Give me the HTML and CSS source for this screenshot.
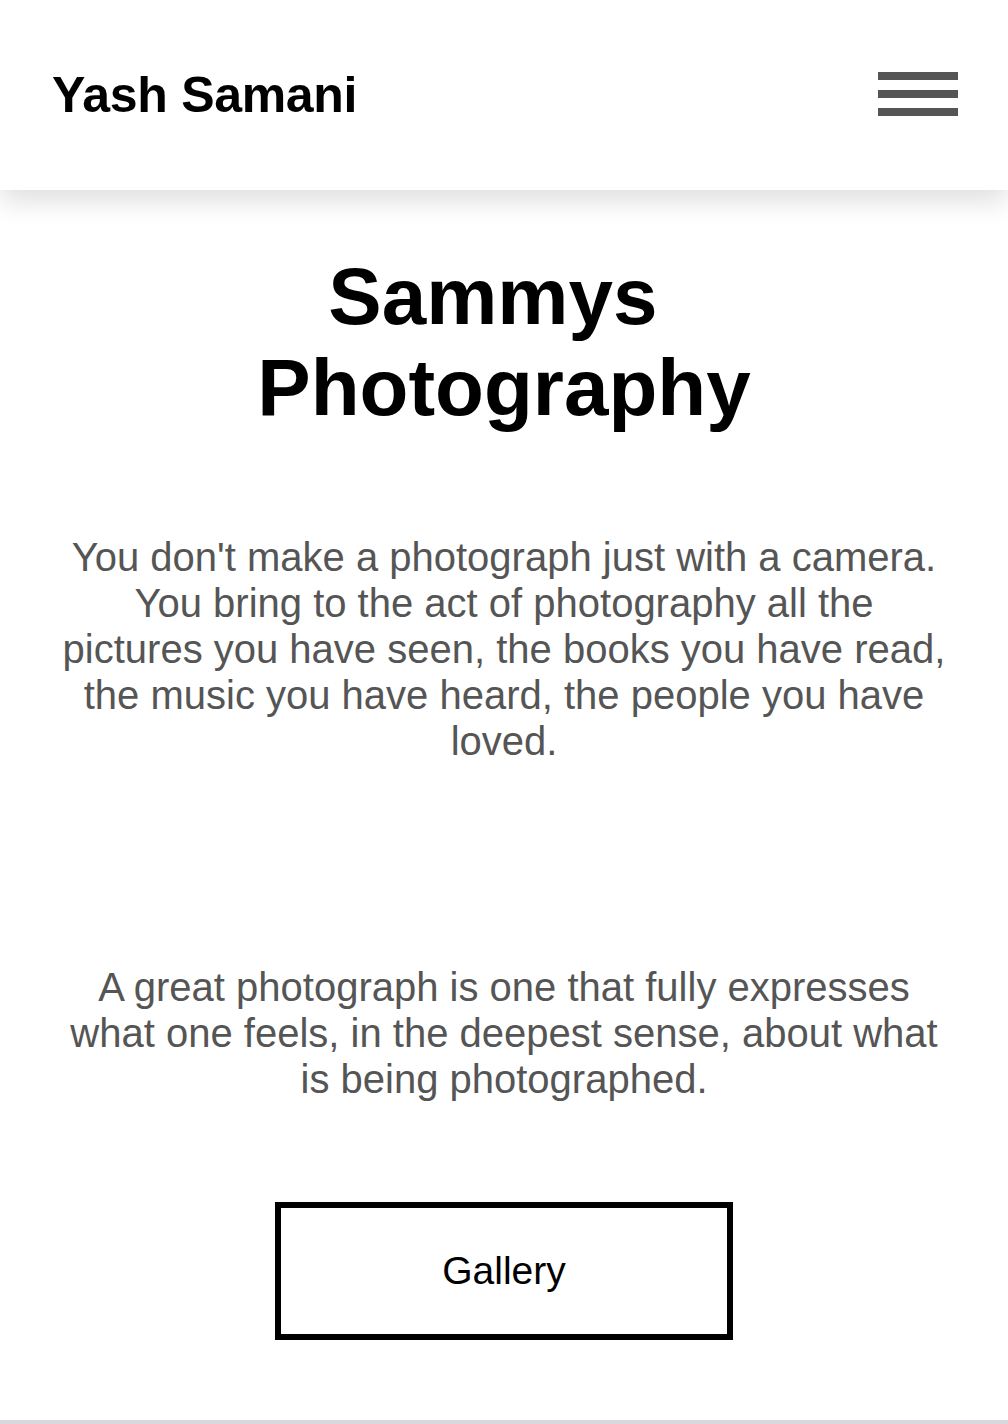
FILE: index.html
```html
<!DOCTYPE html>
<html lang="en">
<head>
<meta charset="utf-8">
<title>Sammys Photography</title>
<link rel="stylesheet" href="styles.css">
</head>
<body>
<header class="site-header">
  <div class="logo">Yash Samani</div>
  <button class="menu-btn" aria-label="Menu">
    <span class="bar"></span>
    <span class="bar"></span>
    <span class="bar"></span>
  </button>
</header>
<main class="hero">
  <h1 class="title">Sammys&nbsp;<br>Photography</h1>
  <p class="quote quote-first">You don't make a photograph just with a camera. You bring to the act of photography all the pictures you have seen, the books you have read, the music you have heard, the people you have loved.</p>
  <p class="quote quote-second">A great photograph is one that fully expresses what one feels, in the deepest sense, about what is being photographed.</p>
  <a class="gallery-btn" href="#">Gallery</a>
</main>
<div class="next-section"></div>
</body>
</html>
```
FILE: styles.css
```css
* { box-sizing: border-box; }
html, body {
  margin: 0;
  padding: 0;
  background: #fff;
  font-family: "Liberation Sans", Arial, Helvetica, sans-serif;
}
body { overflow: hidden; }
.site-header {
  position: relative;
  z-index: 2;
  height: 190px;
  padding: 0 50px 0 52px;
  display: flex;
  align-items: center;
  justify-content: space-between;
  background: #fff;
  box-shadow: 0 12px 24px rgba(0, 0, 0, 0.12);
}
.logo {
  font-size: 50px;
  font-weight: 700;
  color: #000;
  letter-spacing: -0.3px;
}
.menu-btn {
  display: flex;
  flex-direction: column;
  gap: 10px;
  padding: 0;
  border: 0;
  background: transparent;
  margin-top: -2px;
}
.bar {
  display: block;
  width: 80px;
  height: 8px;
  background: #555;
}
.hero {
  display: flex;
  flex-direction: column;
  align-items: center;
  padding: 61px 0 80px;
  text-align: center;
}
.title {
  margin: 0;
  font-size: 80px;
  line-height: 91px;
  font-weight: 700;
  color: #000;
}
.quote {
  width: 885px;
  margin: 0;
  font-size: 40px;
  line-height: 46px;
  color: #555;
}
.quote-first { margin-top: 101px; }
.quote-second { margin-top: 200px; }
.gallery-btn {
  margin-top: 100px;
  width: 458px;
  height: 138px;
  border: 6px solid #000;
  display: flex;
  align-items: center;
  justify-content: center;
  font-size: 39px;
  color: #000;
  text-decoration: none;
}
.next-section {
  height: 200px;
  background: #d9d9dd;
}
```
